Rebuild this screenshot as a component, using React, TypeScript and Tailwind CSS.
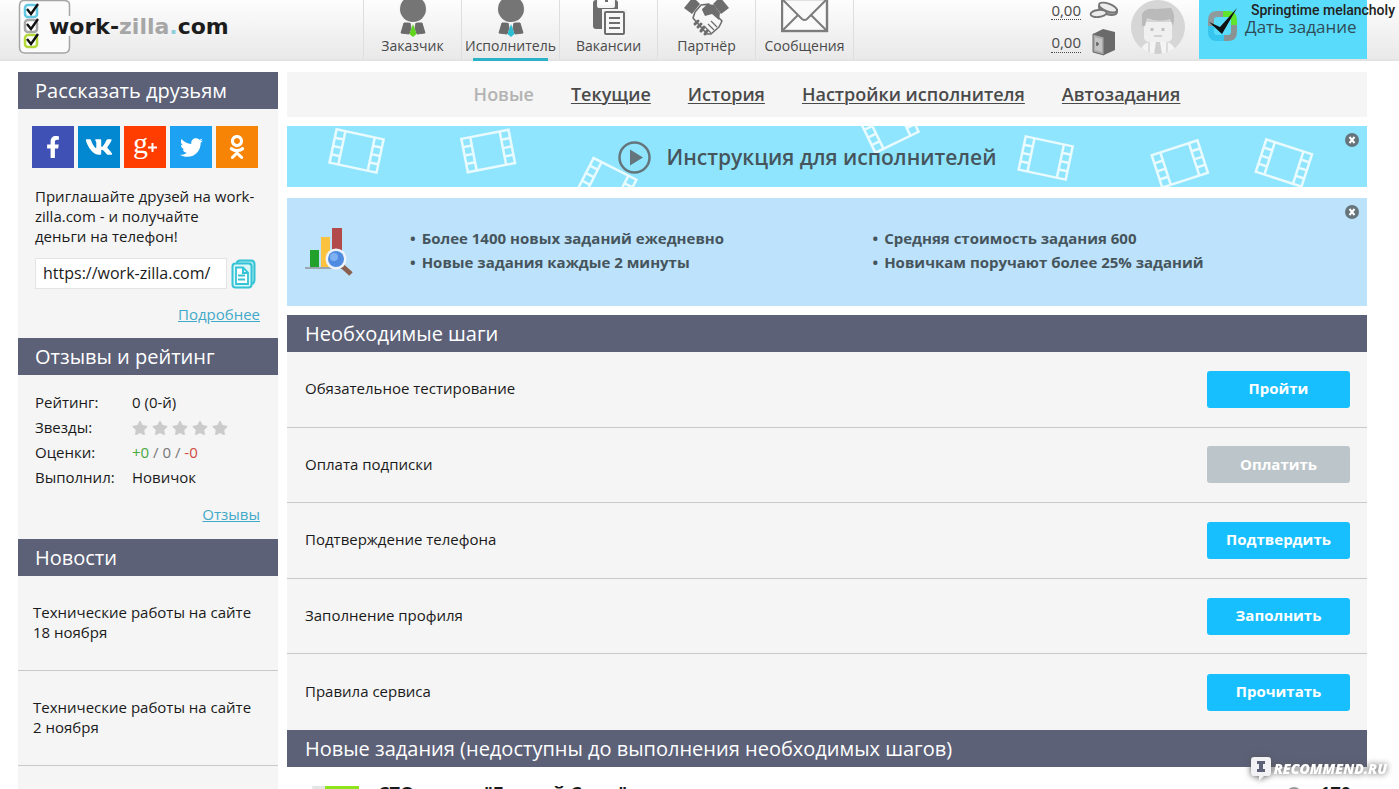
import type { ReactNode } from 'react';
import { FaFacebookF, FaOdnoklassniki, FaStar, FaTwitter, FaVk } from 'react-icons/fa';

const MedalIcon = ({ color }: { color: string }) => (
  <svg width="48" height="38" viewBox="0 0 48 38">
    <path d="M15 23 L21 23 L22 28 L20 34 L12 33 Z M33 23 L27 23 L26 28 L28 34 L36 33 Z" fill="#6b6b6b" stroke="#6b6b6b" strokeLinejoin="round" />
    <circle cx="24" cy="9" r="14" fill="#f4f4f4" />
    <circle cx="24" cy="9" r="13" fill="#757575" />
    <path d="M24 24 L27.5 34 L24 37 L20.5 34 Z" fill={color} />
  </svg>
);

const ClipboardIcon = () => (
  <svg width="48" height="38" viewBox="0 0 48 38">
    <rect x="8" y="0" width="25" height="29" rx="3" fill="#6d6d6d" />
    <path d="M12 0 H30 V6 Q30 8 28 8 H14 Q12 8 12 6 Z" fill="#f5f5f5" />
    <path d="M14 0 H28 V4 Q28 5 27 5 H15 Q14 5 14 4 Z" fill="#fdfdfd" />
    <path d="M20 0 H23 V2 H20 Z" fill="#6d6d6d" />
    <rect x="17" y="9" width="25" height="28" fill="#f3f3f3" />
    <rect x="20" y="12" width="19" height="22" rx="1" fill="#f7f7f7" stroke="#6d6d6d" strokeWidth="2" />
    <path d="M24 18 H35 M24 23 H35 M24 28 H35" stroke="#6d6d6d" strokeWidth="2" />
  </svg>
);

const HandshakeIcon = () => (
  <svg width="48" height="38" viewBox="0 0 48 38">
    <path d="M10 -3 L17 4 L9 14 L1 8 Z M37 -3 L30 4 L38 14 L46 8 Z" fill="#6d6d6d" />
    <path d="M12 12 L18 5 L26 4 L20 10 L22 14 L30 12 L39 21 L36 27 L28 34 L24 34 L10 18 Z" fill="#f7f7f7" stroke="#6d6d6d" strokeWidth="1.600" strokeLinejoin="round" />
    <path d="M19 9 L25 4 L31 5 L37 13 L36 20 L29 14 L22 16 Z" fill="#6d6d6d" />
    <path d="M28 21 L34 27 M25 24 L31 30 M22 27 L28 33" stroke="#6d6d6d" strokeWidth="1.300" />
    <path d="M12 24 L15 21 M15 27 L18 24 M18 31 L21 27 M22 34 L24 31" stroke="#6d6d6d" strokeWidth="3" strokeLinecap="round" />
  </svg>
);

const MailIcon = () => (
  <svg width="48" height="38" viewBox="0 0 48 38">
    <rect x="1" y="-1" width="45" height="32" fill="#fafafa" stroke="#7c7c7c" strokeWidth="2.4" />
    <path d="M2 0 L21 19 Q23.500 21 26 19 L45 0 M2 30 L17 15 M45 30 L30 15" fill="none" stroke="#7c7c7c" strokeWidth="2" />
  </svg>
);

const navItems: { label: string; icon: ReactNode; active?: boolean }[] = [
  { label: 'Заказчик', icon: <MedalIcon color="#5fd51c" /> },
  { label: 'Исполнитель', icon: <MedalIcon color="#2bbdd2" />, active: true },
  { label: 'Вакансии', icon: <ClipboardIcon /> },
  { label: 'Партнёр', icon: <HandshakeIcon /> },
  { label: 'Сообщения', icon: <MailIcon /> },
];

const tabs = ['Новые', 'Текущие', 'История', 'Настройки исполнителя', 'Автозадания'];

const socials = [
  { name: 'Facebook', bg: 'bg-[#3f51b5]', icon: <FaFacebookF size={22} /> },
  { name: 'ВКонтакте', bg: 'bg-[#0288d1]', icon: <FaVk size={28} /> },
  {
    name: 'Google Plus',
    bg: 'bg-[#ff3d00]',
    icon: (
      <span className="flex items-center font-['Liberation_Serif',serif] text-3xl leading-none">
        <span className="pb-2">g</span>
        <svg width="9" height="9" viewBox="0 0 9 9" stroke="currentColor" strokeWidth="2">
          <path d="M4.500 0 V9 M0 4.500 H9" />
        </svg>
      </span>
    ),
  },
  { name: 'Twitter', bg: 'bg-[#1da1f2]', icon: <FaTwitter size={23} /> },
  { name: 'Одноклассники', bg: 'bg-[#f78404]', icon: <FaOdnoklassniki size={24} /> },
];

const steps = [
  { title: 'Обязательное тестирование', action: 'Пройти' },
  { title: 'Оплата подписки', action: 'Оплатить', disabled: true },
  { title: 'Подтверждение телефона', action: 'Подтвердить' },
  { title: 'Заполнение профиля', action: 'Заполнить' },
  { title: 'Правила сервиса', action: 'Прочитать' },
];

const facts = [
  'Более 1400 новых заданий ежедневно',
  'Средняя стоимость задания 600',
  'Новые задания каждые 2 минуты',
  'Новичкам поручают более 25% заданий',
];

const news = ['Технические работы на сайте 18 ноября', 'Технические работы на сайте 2 ноября'];

const films = [
  'translate(69.500 25) rotate(12)',
  'translate(201 25) rotate(-11)',
  'translate(320 58) rotate(27)',
  'translate(602 1) rotate(-26)',
  'translate(758 32) rotate(12)',
  'translate(892 38) rotate(-18)',
  'translate(996 37) rotate(18)',
];

const Logo = () => (
  <a href="#" className="relative flex h-[54px] w-[217px] items-center" aria-label="work-zilla.com">
    <svg className="absolute left-0 top-0" width="54" height="54" viewBox="0 0 54 54" fill="none">
      <path d="M51.500 16 V5 Q51.500 0.500 46 0.500 H6 Q1.500 0.500 1.500 6 V47 Q1.500 53 7 53 H46 Q51.500 53 51.500 47 V36" fill="#fbfbfb" stroke="#a5a5a5" strokeWidth="1.500" />
      {[
        { y: 5, c: '#62c8e4' },
        { y: 20, c: '#a9a9a9' },
        { y: 35, c: '#b5d93a' },
      ].map((b) => (
        <g key={b.y}>
          <rect x="7" y={b.y} width="12" height="12" rx="3" fill="#fff" stroke={b.c} strokeWidth="2.500" />
          <path d={`M9 ${b.y + 4} L13 ${b.y + 9} L20 ${b.y - 1}`} stroke="#111" strokeWidth="2.400" />
        </g>
      ))}
    </svg>
    <span className="relative ml-[31px] whitespace-nowrap font-['DejaVu_Sans',sans-serif] text-[22px] font-bold leading-none text-[#1c1c1c]">
      work-<span className="text-[#a6a6a6]">zilla</span>
      <span className="text-[#8fd0dc]">.</span>com
    </span>
  </a>
);

const CoinsIcon = () => (
  <svg width="30" height="18" viewBox="0 0 30 18" fill="#ececec" stroke="#757575" strokeWidth="1.800">
    <path d="M10 4 V7 Q13 13 22 14 Q28 14 28 11 V8" fill="#a5a5a5" />
    <ellipse cx="19" cy="6.500" rx="9.500" ry="3.800" transform="rotate(20 19 6.500)" />
    <ellipse cx="9.500" cy="12.500" rx="8" ry="3.500" transform="rotate(-6 9.500 12.500)" />
  </svg>
);

const SafeIcon = () => (
  <svg width="26" height="28" viewBox="0 0 26 28">
    <path d="M2 6 L12 1 L24 4 L24 22 L13 27 L2 24 Z" fill="#6a6a6a" />
    <path d="M2 6 L13 9 V27 L2 24 Z" fill="#a9a9a9" stroke="#6a6a6a" />
    <path d="M4 9 L11 11 V24 L4 22 Z" fill="#c4c4c4" />
    <path d="M6 14 V18 M8 16 H5" stroke="#666" strokeWidth="1.500" />
  </svg>
);

const Avatar = () => (
  <svg width="54" height="54" viewBox="0 0 54 54">
    <clipPath id="face">
      <circle cx="27" cy="27" r="27" />
    </clipPath>
    <g clipPath="url(#face)">
      <rect width="54" height="54" fill="#d6d6d6" />
      <path d="M9 54 Q10 44 18 42 H36 Q44 44 45 54 Z" fill="#f4f4f4" />
      <path d="M13 22 H41 V38 Q40 42 35 42 H19 Q14 42 13 38 Z" fill="#f0f0f0" />
      <path d="M11 26 V14 Q14 8 24 9 L40 8 Q45 14 42 26 L39 19 Q28 23 16 18 L14 26 Z" fill="#bababa" />
      <path d="M21 28 V31 M32 28 V31" stroke="#c2c2c2" strokeWidth="3" />
      <path d="M23 36 H31" stroke="#d2d2d2" strokeWidth="2" />
      <path d="M25 42 H29 L31 54 H23 Z" fill="#cfcfcf" />
      <path d="M18 42 V54 M36 42 V54" stroke="#dcdcdc" strokeWidth="2" />
    </g>
  </svg>
);

const TaskIcon = () => (
  <svg width="32" height="36" viewBox="0 0 32 36" fill="none" strokeWidth="6">
    <path d="M4 19 V13 Q4 7 10 7 H16" stroke="#8f9a9c" />
    <path d="M16 7 H21 Q27 7 27 13 V18" stroke="#5fe32c" />
    <path d="M27 18 V25 Q27 31 21 31 H17" stroke="#8b9294" />
    <path d="M17 31 H10 Q4 31 4 25 V19" stroke="#35c5ee" />
    <path d="M2 15 L13 20 L30 1 L15 27 Z" fill="#111" />
  </svg>
);

const ChartIcon = () => (
  <svg width="48" height="48" viewBox="0 0 48 48">
    <rect x="0" y="39" width="38" height="2" fill="#9aa7b0" />
    <rect x="5" y="22" width="9" height="17" fill="#22a02c" />
    <rect x="16" y="9" width="9" height="30" fill="#fbc23f" />
    <rect x="27" y="0" width="10" height="39" fill="#b24a4c" />
    <path d="M36 37 L46 46" stroke="#8a5f50" strokeWidth="5" />
    <circle cx="31" cy="31" r="10.500" fill="#eef4fa" />
    <circle cx="31" cy="31" r="8" fill="#4f8be0" />
    <circle cx="29" cy="29" r="4" fill="#7fb0f2" />
  </svg>
);

const CopyIcon = () => (
  <svg width="25" height="30" viewBox="0 0 25 30" fill="none" stroke="#35c3d6" strokeWidth="2">
    <path d="M6 4 Q6 1.500 9 1.500 H20 Q23.500 1.500 23.500 5 V21 Q23.500 24 21 25" fill="#a6e8ee" />
    <rect x="1.500" y="4.500" width="19" height="24" rx="3" fill="#d9f8fa" />
    <path d="M5 8.500 H12 L17 13.500 V25 H5 Z" fill="#fff" strokeWidth="1.800" />
    <path d="M12 8.500 V14 H17 M7 16.500 H14 M7 20.500 H14" />
  </svg>
);

const SectionTitle = ({ children, className = 'px-[18px]' }: { children: ReactNode; className?: string }) => (
  <h2 className={`flex h-[37px] items-center bg-[#5c6178] text-xl font-medium text-white ${className}`}>{children}</h2>
);

const CloseButton = () => (
  <button type="button" aria-label="Закрыть" className="absolute right-2 top-[7px] text-[#66757b]">
    <svg width="14" height="14" viewBox="0 0 14 14">
      <circle cx="7" cy="7" r="7" fill="currentColor" />
      <path d="M4.500 4 L9.500 10 M9.500 4 L4.500 10" stroke="#fff" strokeWidth="2" />
    </svg>
  </button>
);

const Header = () => (
  <header className="relative flex h-[61px] border-b-2 border-[#e3e3e3] bg-gradient-to-b from-[#fdfdfd] to-[#e9e9e9] pl-[18px] pr-8">
    <Logo />
    <nav className="ml-32 flex border-l border-[#dedede]">
      {navItems.map((item) => (
        <a key={item.label} href="#" className="relative flex w-[98px] flex-col items-center border-r border-[#dedede] text-sm text-[#4a4a4a]">
          {item.icon}
          <span className="leading-4">{item.label}</span>
          {item.active && <span className="absolute -bottom-0.5 h-[3px] w-[75px] bg-[#2db1c6]"></span>}
        </a>
      ))}
    </nav>
    <div className="ml-auto flex">
      <div className="flex flex-col gap-2 pt-px text-[15px] text-[#4a4a4a]">
        <div className="flex items-start gap-2">
          <span className="border-b border-dotted border-[#4a4a4a] leading-[18px]">0,00</span>
          <CoinsIcon />
        </div>
        <div className="flex items-start gap-2.5">
          <span className="mt-1 border-b border-dotted border-[#4a4a4a] leading-5">0,00</span>
          <SafeIcon />
        </div>
      </div>
      <a href="#" aria-label="Профиль" className="ml-3">
        <Avatar />
      </a>
      <a href="#" className="ml-3.5 flex w-[168px] items-start gap-1.5 bg-[#59dcfb] pl-2 pt-[7px] text-[17px] text-[#2f4c58]">
        <TaskIcon />
        <span className="pt-1.5 leading-7">Дать задание</span>
      </a>
    </div>
    <span className="absolute right-1 top-0 pt-0.5 font-['Roboto',sans-serif] text-sm font-medium leading-4 text-[#222]">Springtime melancholy</span>
  </header>
);

const Sidebar = () => (
  <aside className="w-[260px] shrink-0 bg-[#f5f5f5]">
    <SectionTitle className="px-[17px]">Рассказать друзьям</SectionTitle>
    <div className="h-[229px] pl-[17px] pr-[18px] pt-[17px]">
      <div className="-ml-[3px] flex gap-1">
        {socials.map((s) => (
          <a key={s.name} href="#" aria-label={s.name} className={`flex size-[42px] items-center justify-center text-white ${s.bg}`}>
            {s.icon}
          </a>
        ))}
      </div>
      <p className="mt-[18px] leading-5">
        Приглашайте друзей на work-zilla.com - и получайте
        <br />
        деньги на телефон!
      </p>
      <div className="mt-3 flex items-center gap-1">
        <input
          type="text"
          readOnly
          aria-label="Ссылка для друзей"
          defaultValue="https://work-zilla.com/"
          className="h-[31px] w-48 border border-[#e4e4e4] bg-white px-[7px] pb-0.5 text-base"
        />
        <button type="button" aria-label="Скопировать">
          <CopyIcon />
        </button>
      </div>
      <p className="mt-[15px] text-right leading-5">
        <a href="#" className="text-[#42a9c9] underline">Подробнее</a>
      </p>
    </div>

    <SectionTitle className="px-[17px]">Отзывы и рейтинг</SectionTitle>
    <div className="h-[164px] pl-[17px] pr-[18px] pt-[15px]">
      <dl className="grid grid-cols-[97px_1fr] leading-[25px]">
        <dt>Рейтинг:</dt>
        <dd>0 (0-й)</dd>
        <dt>Звезды:</dt>
        <dd className="flex items-center gap-1 text-[#cbcbcb]">
          {[1, 2, 3, 4, 5].map((n) => (
            <FaStar key={n} size={16} />
          ))}
        </dd>
        <dt>Оценки:</dt>
        <dd className="text-[#777]">
          <span className="text-[#4aa83a]">+0</span> / 0 / <span className="text-[#cf4a40]">-0</span>
        </dd>
        <dt>Выполнил:</dt>
        <dd>Новичок</dd>
      </dl>
      <p className="mt-3.5 text-right leading-5">
        <a href="#" className="text-[#42a9c9] underline">Отзывы</a>
      </p>
    </div>

    <SectionTitle className="px-[17px]">Новости</SectionTitle>
    <ul className="pb-7">
      {news.map((n) => (
        <li key={n} className="border-b border-[#c9c9c9] px-[15px] pb-7 pt-[26px] leading-5">
          {n}
        </li>
      ))}
    </ul>
  </aside>
);

const Banner = () => (
  <section className="relative mt-[9px] flex h-[61px] items-center justify-center gap-4 overflow-hidden bg-[#8fe5fe] pr-10 pt-0.5">
    <svg className="absolute inset-0 size-full" viewBox="0 0 1079 61" preserveAspectRatio="xMidYMid slice" fill="none" stroke="#e9fbff" strokeWidth="2.500">
      {films.map((t) => (
        <g key={t} transform={t}>
          <rect x="-24" y="-17" width="48" height="34" />
          <path d="M-15 -17 V17 M15 -17 V17 M-24 -8.500 H-15 M-24 0 H-15 M-24 8.500 H-15 M15 -8.500 H24 M15 0 H24 M15 8.500 H24" />
        </g>
      ))}
    </svg>
    <svg className="relative" width="33" height="33" viewBox="0 0 33 33">
      <circle cx="16.500" cy="16.500" r="15" fill="#8fe5fe" stroke="#64757c" strokeWidth="2.500" />
      <path d="M12 8.500 L25 16.500 L12 24.500 Z" fill="#64757c" />
    </svg>
    <a href="#" className="relative text-[21px] font-semibold text-[#46555c]">Инструкция для исполнителей</a>
    <CloseButton />
  </section>
);

const Main = () => (
  <main className="min-w-0 flex-1">
    <nav className="flex h-[45px] items-center justify-center gap-[37px] bg-[#f5f5f5] pb-0.5 text-lg font-semibold text-[#4a4a4a]">
      {tabs.map((t, i) => (
        <a key={t} href="#" className={i === 0 ? 'text-[#b3b3b3]' : 'underline decoration-1 underline-offset-2'}>
          {t}
        </a>
      ))}
    </nav>

    <Banner />

    <section className="relative mt-[11px] flex h-[108px] items-center bg-[#bde3fc] pl-[18px] pr-8">
      <ChartIcon />
      <ul className="ml-[57px] grid flex-1 grid-cols-2 pb-1 font-bold leading-6 text-[#46555c]">
        {facts.map((f) => (
          <li key={f} className="flex gap-1.5">
            <span>•</span>
            {f}
          </li>
        ))}
      </ul>
      <CloseButton />
    </section>

    <section className="mt-[9px]">
      <SectionTitle>Необходимые шаги</SectionTitle>
      <ul className="grid h-[378px] grid-rows-5 divide-y divide-[#c9c9c9] bg-[#f5f5f5]">
        {steps.map((s) => (
          <li key={s.title} className="flex items-center justify-between pl-[18px] pr-[17px]">
            <span className="pb-0.5">{s.title}</span>
            <button
              type="button"
              disabled={s.disabled}
              className={`h-[37px] w-[143px] rounded-[3px] pb-0.5 font-bold text-white ${s.disabled ? 'bg-[#bcc5c9]' : 'bg-[#18bfff]'}`}
            >
              {s.action}
            </button>
          </li>
        ))}
      </ul>
    </section>

    <section>
      <SectionTitle>Новые задания (недоступны до выполнения необходимых шагов)</SectionTitle>
      <article className="flex items-start pl-[25px] pr-4 pt-3 text-lg font-bold">
        <svg className="mt-[7px]" width="48" height="40" viewBox="0 0 48 40">
          <path d="M0 0 H14 V40 H6 Z" fill="#e4e4e4" />
          <path d="M13 0 H47 V40 H13 Z" fill="#8de31c" />
        </svg>
        <h3 className="ml-[18px] flex-1">СТО рынка "Горный Союз"</h3>
        <svg className="mr-[18px] mt-2" width="16" height="16" viewBox="0 0 16 16">
          <circle cx="8" cy="8" r="8" fill="#9a9a9a" />
        </svg>
        <span>170</span>
      </article>
    </section>
  </main>
);

const Watermark = () => (
  <div className="absolute bottom-2 right-3 flex items-center gap-0.5 text-white drop-shadow-[0_0_3px_#555]">
    <svg width="22" height="25" viewBox="0 0 22 25">
      <path d="M4 1 H18 Q21 1 21 4 V17 Q21 20 18 20 H14 L9 25 V20 H4 Q1 20 1 17 V4 Q1 1 4 1 Z" fill="#f2f2f4" />
      <path d="M7 5 H15 V8 H13 V13 H15 V16 H7 V13 H9 V8 H7 Z" fill="#5c6178" />
    </svg>
    <span className="text-sm font-extrabold italic leading-none">RECOMMEND.RU</span>
  </div>
);

export default function App() {
  return (
    <div className="relative h-screen overflow-hidden bg-white font-['Open_Sans',sans-serif] text-[15px] text-[#1a1a1a]">
      <Header />
      <div className="flex gap-[9px] pl-[18px] pr-8 pt-[11px]">
        <Sidebar />
        <Main />
      </div>
      <Watermark />
    </div>
  );
}
